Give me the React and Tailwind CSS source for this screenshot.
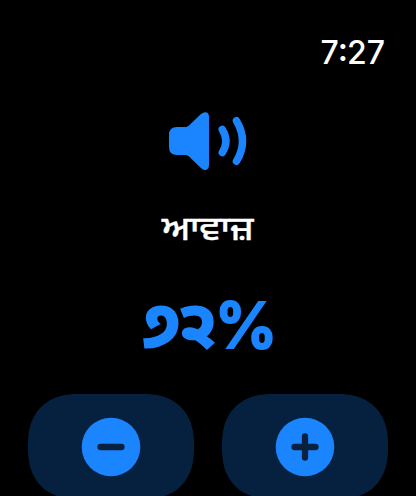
function RoundButton({ label, children }) {
  return (
    <button aria-label={label} className="flex h-[105px] w-[166px] items-center justify-center rounded-[50px] bg-[#06213f] [corner-shape:superellipse(1.2)]">
      <svg width="60" height="60" viewBox="0 0 60 60" fill="none">
        <circle cx="30" cy="30" r="29.3" fill="#1a85ff" />
        {children}
      </svg>
    </button>
  );
}

export default function App() {
  return (
    <div className="flex h-[496px] w-[416px] flex-col items-center overflow-hidden bg-black font-['Inter','Noto_Sans_Gurmukhi','Noto_Sans',sans-serif]">
      <header className="flex h-[100px] w-full shrink-0 justify-end pt-[35px] pr-[31px] text-[32px] leading-[36px] font-medium text-white [font-feature-settings:'case']">
        7<span className="-mx-[1px] font-semibold">:</span>27
      </header>
      <svg className="h-[80px] w-[106px] shrink-0" viewBox="0 0 106 80" fill="none">
        <path d="M22 27H31Q32.500 27 34 25.600L46 14Q49 11.500 52 12.600Q54 13.500 54 17V65Q54 68.500 52 69.500Q49 71 46 68L34 56.500Q32.500 55 31 55H22Q14 55 14 47V35Q14 27 22 27Z" fill="#1a85ff" />
        <path d="M67.300 29.500Q74.500 41 67.300 52.500M81.500 20.800Q93.500 41 81.500 61.200" stroke="#1a85ff" strokeWidth="7.500" strokeLinecap="round" />
      </svg>
      <div className="mt-[26px] h-[44px] shrink-0 scale-x-[1.130] text-[33px] leading-[44px] font-medium text-white [-webkit-text-stroke:0.300px_white]">ਆਵਾਜ਼</div>
      <div className="mt-[33px] flex h-[85px] shrink-0 pl-[4px] leading-[84px] whitespace-nowrap text-[#1a85ff]">
        <span className="-mr-[2px] h-[83px] text-[63px] leading-[82px] font-bold [-webkit-text-stroke:3px_#1a85ff]">੭੨</span>
        <span className="-mr-[1px] text-[63px] leading-[85px] font-semibold [-webkit-text-stroke:2px_#1a85ff]">%</span>
      </div>
      <div className="mt-[26px] flex shrink-0 gap-[28px]">
        <RoundButton label="ਘਟਾਓ">
          <path d="M19.500 30H40.500" stroke="#07213f" strokeWidth="6.300" strokeLinecap="round" />
        </RoundButton>
        <RoundButton label="ਵਧਾਓ">
          <path d="M19.500 30H40.500M30 19.500V40.500" stroke="#07213f" strokeWidth="6.300" strokeLinecap="round" />
        </RoundButton>
      </div>
    </div>
  );
}
